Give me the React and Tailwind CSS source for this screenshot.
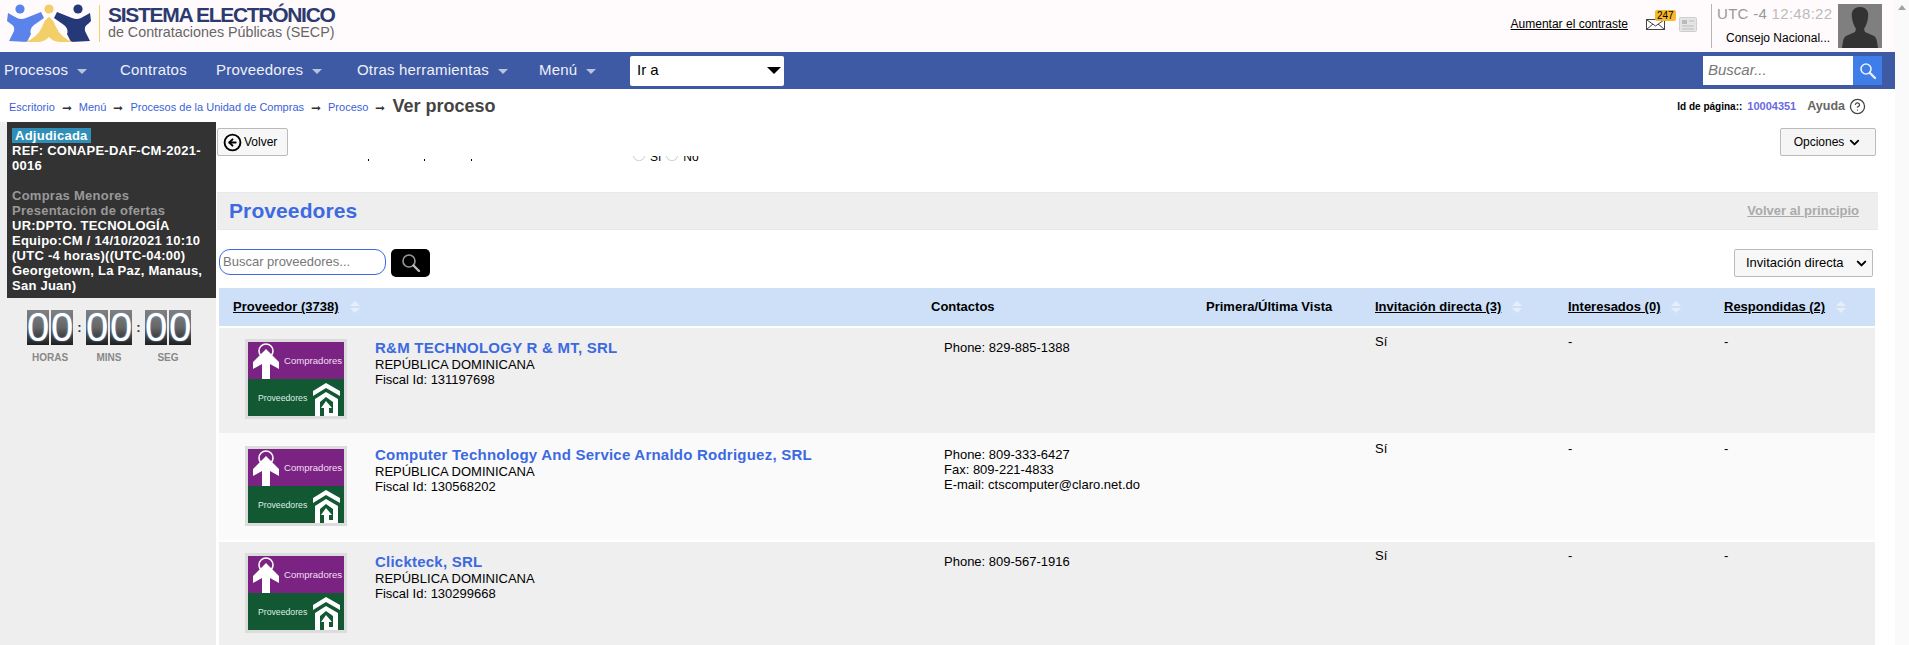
import { ChevronDown, CircleArrowLeft, CircleHelp } from 'lucide-react';

const gridCols = 'grid grid-cols-[700px_275px_169px_193px_156px_163px]';

const providers = [
  { name: 'R&M TECHNOLOGY R & MT, SRL', fiscal: '131197698', contacts: ['Phone: 829-885-1388'], invited: 'Sí', rowClass: 'h-[105px] bg-[#efefef]' },
  { name: 'Computer Technology And Service Arnaldo Rodriguez, SRL', fiscal: '130568202', contacts: ['Phone: 809-333-6427', 'Fax: 809-221-4833', 'E-mail: ctscomputer@claro.net.do'], invited: 'Sí', rowClass: 'h-[107px] bg-[#fafafa] mb-[2px] pt-[2px]' },
  { name: 'Clickteck, SRL', fiscal: '130299668', contacts: ['Phone: 809-567-1916'], invited: 'Sí', rowClass: 'h-[103px] bg-[#efefef]' },
];

const Logo = () => (
  <svg width="100" height="46" viewBox="0 0 100 46" className="shrink-0">
    <circle cx="19" cy="8" r="4.6" fill="#5b83ec" />
    <circle cx="48" cy="8" r="4.6" fill="#f3cf6a" />
    <circle cx="77" cy="8" r="4.6" fill="#253878" />
    <path d="M7 12 L16 17 Q20 19 25 17 L40 11 L43 17 L33 24 Q28 28 30 33 L26 41 L8 40 L13 30 Q14 25 10 23 L6 20 Z" fill="#5b83ec" />
    <path d="M89 12 L80 17 Q76 19 71 17 L56 11 L53 17 L63 24 Q68 28 66 33 L70 41 L89 40 L84 30 Q83 25 87 23 L90 20 Z" fill="#253878" />
    <path d="M24 41 Q36 37 41 26 Q44 18 48 16 Q52 18 55 26 Q60 37 72 41 L60 41 Q52 41 48 36 Q44 41 36 41 Z" fill="#f3cf6a" />
    <rect x="98" y="4" width="1" height="37" fill="#f3cf6a" />
  </svg>
);

const AccountImage = () => (
  <svg viewBox="0 0 96 74" className="block h-[80px] w-[102px] border-[3px] border-[#dcdcdc] bg-white">
    <rect width="96" height="37" fill="#7b2383" />
    <rect y="37" width="96" height="37" fill="#115833" />
    <circle cx="18" cy="9" r="7" fill="none" stroke="#fff" strokeWidth="1.6" />
    <path d="M18 7 L31 20 L31 27 L22 22 L22 37 L14 37 L14 22 L5 27 L5 20 Z" fill="#fff" />
    <text x="36" y="22" fontSize="9.6" fill="#f0dff2" fontFamily="Liberation Sans, sans-serif">Compradores</text>
    <text x="10" y="59" fontSize="8.7" fill="#dfeee6" fontFamily="Liberation Sans, sans-serif">Proveedores</text>
    <path d="M65 49 L78 41 L92 49 L92 54 L78 46 L65 54 Z" fill="#fff" />
    <path d="M67 74 L67 57 L78 50 L90 57 L90 74 L85 74 L85 60 L78 55 L72 60 L72 74 Z" fill="#fff" />
    <path d="M78 59 L84 66 L81 66 L81 71 L85 71 L85 74 L76 74 L76 66 L73 66 Z" fill="#fff" />
  </svg>
);

const Digit = ({ value }) => (
  <div className="flex gap-[2px]">
    {value.split('').map((d, i) => (
      <div key={i} className="flex h-[35px] w-[22px] items-center justify-center bg-gradient-to-b from-[#808080] via-[#666666] to-[#1f1f1f] text-[40px] leading-[35px] text-white [text-shadow:0_0_2px_#6fa8e8]">
        {d}
      </div>
    ))}
  </div>
);

const Colon = () => <span className="w-[13px] text-center text-[13px] font-bold leading-[35px] text-[#333]">:</span>;

const Caret = () => <span className="ml-[9px] mt-[1px] h-0 w-0 border-x-[5px] border-t-[5px] border-x-transparent border-t-[#b9c3dd]"></span>;

const SortArrows = () => (
  <span className="ml-[11px] inline-flex flex-col gap-[2px]">
    <span className="h-0 w-0 border-x-[5px] border-b-[5px] border-x-transparent border-b-[#e6eefa]"></span>
    <span className="h-0 w-0 border-x-[5px] border-t-[5px] border-x-transparent border-t-[#e6eefa]"></span>
  </span>
);

const BreadArrow = () => <span className="mx-[7px] text-[12px] leading-none text-[#333]">➞</span>;

const NavItem = ({ label, caret, className }) => (
  <div className={`flex items-center text-[15px] tracking-[0.2px] text-[#eef1f8] ${className}`}>
    {label}
    {caret && <Caret />}
  </div>
);

const HeaderCell = ({ label, className }) => (
  <div className={`flex items-center text-[13px] font-bold text-black ${className}`}>
    <span className="underline">{label}</span>
    <SortArrows />
  </div>
);

export default function App() {
  return (
    <div className="flex h-[645px] overflow-hidden bg-white font-['Liberation_Sans',Arial,sans-serif] text-[13px] text-black">
      <div className="w-[1895px] shrink-0">
        {/* Cabecera */}
        <div className="flex h-[52px] items-start bg-[#fffbfc]">
          <div className="ml-[1px] mt-[1px]"><Logo /></div>
          <div className="ml-[7px] mt-[5px] text-[#2c3a70]">
            <div className="text-[21px] font-bold leading-[20px] tracking-[-1.3px]">SISTEMA ELECTRÓNICO</div>
            <div className="text-[14.3px] leading-[15px] text-[#666]">de Contrataciones Públicas (SECP)</div>
          </div>
          <div className="ml-auto mr-[13px] flex h-[52px] items-center">
            <span className="mt-[-4px] text-[12px] underline">Aumentar el contraste</span>
            <div className="relative ml-[18px] h-[32px] w-[52px]">
              <span className="absolute left-[9px] top-0 z-10 rounded-[2px] bg-[#f6b92c] px-[2px] text-[10px] leading-[11px]">247</span>
              <svg width="19" height="12" viewBox="0 0 19 12" className="absolute left-0 top-[9px]">
                <rect x="0.5" y="0.5" width="18" height="10" fill="#fff" stroke="#444" />
                <path d="M1 1 L9.5 7 L18 1 M1 10 L7 5 M18 10 L12 5" fill="none" stroke="#444" />
              </svg>
              <svg width="18" height="15" viewBox="0 0 18 15" className="absolute left-[33px] top-[7px]">
                <rect x="0.5" y="0.5" width="17" height="14" rx="1" fill="#e4e4e4" stroke="#cfcfcf" />
                <rect x="3" y="3" width="5" height="4" fill="#bbb" />
                <path d="M10 4 H15 M3 9 H15 M3 12 H15" stroke="#bbb" />
              </svg>
            </div>
            <div className="ml-[13px] flex h-[44px] w-[127px] flex-col border-l border-[#b5b5b5] pl-[5px]">
              <div className="whitespace-nowrap text-[15px] leading-[19px] tracking-[0.3px] text-[#999]">UTC -4 <span className="text-[#bbb]">12:48:22</span></div>
              <div className="mt-[8px] pl-[9px] text-[12px] leading-[15px]">Consejo Nacional...</div>
            </div>
            <div className="flex h-[44px] w-[44px] items-center justify-center bg-[#7f7f7f]">
              <svg width="40" height="44" viewBox="0 0 40 44">
                <path d="M20 3 C27 3 29 8 28 14 C27.5 19 25 23 24 25 L25 28 L34 32 C37 34 37 38 38 44 L2 44 C3 38 3 34 6 32 L15 28 L16 25 C15 23 12.5 19 12 14 C11 8 13 3 20 3 Z" fill="#333" />
              </svg>
            </div>
          </div>
        </div>

        {/* Menú principal */}
        <div className="flex h-[37px] items-center bg-[#3f5aa5] pl-[4px] pr-[13px]">
          <NavItem label="Procesos" caret className="w-[116px]" />
          <NavItem label="Contratos" className="w-[96px]" />
          <NavItem label="Proveedores" caret className="w-[141px]" />
          <NavItem label="Otras herramientas" caret className="w-[182px]" />
          <NavItem label="Menú" caret className="w-[91px]" />
          <div className="flex h-[30px] w-[154px] items-center justify-between rounded-[2px] bg-white pl-[7px] pr-[3px] text-[15px]">
            Ir a
            <span className="h-0 w-0 border-x-[7px] border-t-[7px] border-x-transparent border-t-black"></span>
          </div>
          <div className="ml-auto flex h-[29px]">
            <div className="flex w-[150px] items-center bg-white pl-[5px] text-[15px] italic text-[#777]">Buscar...</div>
            <div className="flex w-[29px] items-center justify-center bg-[#3f7ee8]">
              <svg width="18" height="18" viewBox="0 0 18 18" fill="none">
                <circle cx="7" cy="7" r="5" stroke="#e6f0ff" strokeWidth="1.6" />
                <path d="M11 11 L16 16" stroke="#e6f0ff" strokeWidth="2.4" strokeLinecap="round" />
              </svg>
            </div>
          </div>
        </div>

        {/* Migas de pan */}
        <div className="flex h-[33px] items-center pl-[9px] pr-[29px] pt-[4px]">
          <div className="flex items-center text-[11px] text-[#3b5fd9]">
            <span>Escritorio</span><BreadArrow />
            <span>Menú</span><BreadArrow />
            <span>Procesos de la Unidad de Compras</span><BreadArrow />
            <span>Proceso</span><BreadArrow />
            <span className="mt-[-3px] text-[18px] font-bold text-[#444]">Ver proceso</span>
          </div>
          <div className="ml-auto mt-[-2px] flex items-center text-[10px] font-bold">
            <span>Id de página::</span>
            <span className="ml-[5px] text-[11px] text-[#6a6adf]">10004351</span>
            <span className="ml-[11px] text-[12.5px] text-[#666]">Ayuda</span>
            <CircleHelp className="ml-[4px] h-[17px] w-[17px] text-[#444]" strokeWidth={1.8} />
          </div>
        </div>

        <div className="flex h-[523px]">
          {/* Panel lateral */}
          <div className="w-[216px] shrink-0 bg-[#eeeeee] pl-[7px]">
            <div className="h-[176px] bg-[#333333] px-[5px] pt-[6px] text-[13px] font-bold leading-[15px] tracking-[0.25px] text-white">
              <span className="bg-[#2f8fb8] px-[3px]">Adjudicada</span>
              <div>REF: CONAPE-DAF-CM-2021-0016</div>
              <div className="mt-[15px] text-[#999]">Compras Menores</div>
              <div className="text-[#999]">Presentación de ofertas</div>
              <div>UR:DPTO. TECNOLOGÍA</div>
              <div>Equipo:CM / 14/10/2021 10:10 (UTC -4 horas)((UTC-04:00) Georgetown, La Paz, Manaus, San Juan)</div>
            </div>
            <div className="mt-[12px] flex pl-[20px]">
              <Digit value="00" />
              <Colon />
              <Digit value="00" />
              <Colon />
              <Digit value="00" />
            </div>
            <div className="mt-[5px] flex gap-[13px] pl-[20px] text-[10px] font-bold text-[#888]">
              <span className="w-[46px] text-center">HORAS</span>
              <span className="w-[46px] text-center">MINS</span>
              <span className="w-[46px] text-center">SEG</span>
            </div>
          </div>

          <div className="ml-[1px] w-[1660px] shrink-0">
            {/* Barra de acciones */}
            <div className="flex h-[34px] items-end justify-between pr-[1px]">
              <button className="flex h-[28px] w-[71px] items-center gap-[2px] rounded-[2px] border border-[#bbb] bg-[#f7f7f7] pl-[5px] text-[12px]">
                <CircleArrowLeft className="h-[19px] w-[19px] text-black" strokeWidth={2.4} />
                Volver
              </button>
              <button className="flex h-[28px] w-[96px] items-center justify-center gap-[3px] rounded-[2px] border border-[#bbb] bg-[#f5f5f5] text-[12px]">
                Opciones
                <ChevronDown className="h-[15px] w-[15px]" strokeWidth={3} />
              </button>
            </div>
            {/* Fila recortada por la barra: solo asoma la parte baja */}
            <div className="flex h-[6px] items-end overflow-hidden pl-[151px]">
              <span className="ml-0 mb-[1px] h-[2px] w-[1px] bg-black"></span>
              <span className="ml-[55px] mb-[1px] h-[2px] w-[1px] bg-black"></span>
              <span className="ml-[46px] mb-[1px] h-[2px] w-[1px] bg-black"></span>
              <span className="ml-[161px] flex h-[6px] items-end gap-[5px] overflow-hidden">
                <span className="mb-[1px] h-[11px] w-[12px] shrink-0 rounded-full border border-[#ccc]"></span>
                <span className="mb-[-2px] text-[12px] leading-[14px]">Sí</span>
                <span className="mb-[1px] h-[11px] w-[12px] shrink-0 rounded-full border border-[#ccc]"></span>
                <span className="mb-[-2px] text-[12px] leading-[14px]">No</span>
              </span>
            </div>

            {/* Sección proveedores */}
            <div className="mt-[30px] flex h-[38px] w-[1661px] items-center justify-between border-y border-[#e8e8e8] bg-[#eeeeee] pl-[12px] pr-[19px]">
              <span className="text-[21px] font-bold tracking-[0.1px] text-[#3d6ae0]">Proveedores</span>
              <span className="text-[13px] font-bold text-[#aaa] underline">Volver al principio</span>
            </div>

            <div className="mt-[19px] flex h-[28px] items-start pl-[2px] pr-[4px]">
              <div className="flex h-[26px] w-[167px] items-center rounded-[11px] border border-[#3d6ae0] bg-white pl-[3px] text-[13px] text-[#777]">Buscar proveedores...</div>
              <div className="ml-[5px] flex h-[28px] w-[39px] items-center justify-center rounded-[5px] bg-black">
                <svg width="20" height="20" viewBox="0 0 20 20" fill="none">
                  <circle cx="8" cy="8" r="6" stroke="#999" strokeWidth="1.6" />
                  <path d="M12.5 12.5 L18 18" stroke="#bbb" strokeWidth="2.4" strokeLinecap="round" />
                </svg>
              </div>
              <div className="ml-auto flex h-[28px] w-[139px] items-center justify-between rounded-[2px] border border-[#bbb] bg-[#f7f7f7] pl-[11px] pr-[3px] text-[13px]">
                Invitación directa
                <ChevronDown className="h-[15px] w-[15px]" strokeWidth={3.2} />
              </div>
            </div>

            {/* Tabla */}
            <div className="ml-[2px] mt-[11px] w-[1656px]">
              <div className={`${gridCols} h-[38px] items-center bg-[#cde0f8]`}>
                <HeaderCell label="Proveedor (3738)" className="pl-[14px]" />
                <div className="pl-[12px] font-bold">Contactos</div>
                <div className="pl-[12px] font-bold">Primera/Última Vista</div>
                <HeaderCell label="Invitación directa (3)" className="pl-[12px]" />
                <HeaderCell label="Interesados (0)" className="pl-[12px]" />
                <HeaderCell label="Respondidas (2)" className="pl-[12px]" />
              </div>
              <div className="mt-[2px]">
                {providers.map((p) => (
                  <div key={p.fiscal} className={`${gridCols} ${p.rowClass}`}>
                    <div className="flex pl-[26px] pt-[11px]">
                      <AccountImage />
                      <div className="ml-[28px] leading-[15px]">
                        <div className="text-[15px] font-bold leading-[18px] tracking-[0.23px] text-[#3d6ae0]">{p.name}</div>
                        <div>REPÚBLICA DOMINICANA</div>
                        <div>Fiscal Id: {p.fiscal}</div>
                      </div>
                    </div>
                    <div className="pl-[25px] pt-[12px] leading-[15px]">
                      {p.contacts.map((c) => <div key={c}>{c}</div>)}
                    </div>
                    <div></div>
                    <div className="pl-[12px] pt-[6px] leading-[15px]">{p.invited}</div>
                    <div className="pl-[12px] pt-[6px] leading-[15px]">-</div>
                    <div className="pl-[12px] pt-[6px] leading-[15px]">-</div>
                  </div>
                ))}
              </div>
            </div>
          </div>
        </div>
      </div>

      {/* Barra de desplazamiento */}
      <div className="flex w-[14px] shrink-0 justify-center bg-[#fafafa] pt-[5px]">
        <span className="h-0 w-0 border-x-[4px] border-b-[5px] border-x-transparent border-b-[#a3a3a3]"></span>
      </div>
    </div>
  );
}
